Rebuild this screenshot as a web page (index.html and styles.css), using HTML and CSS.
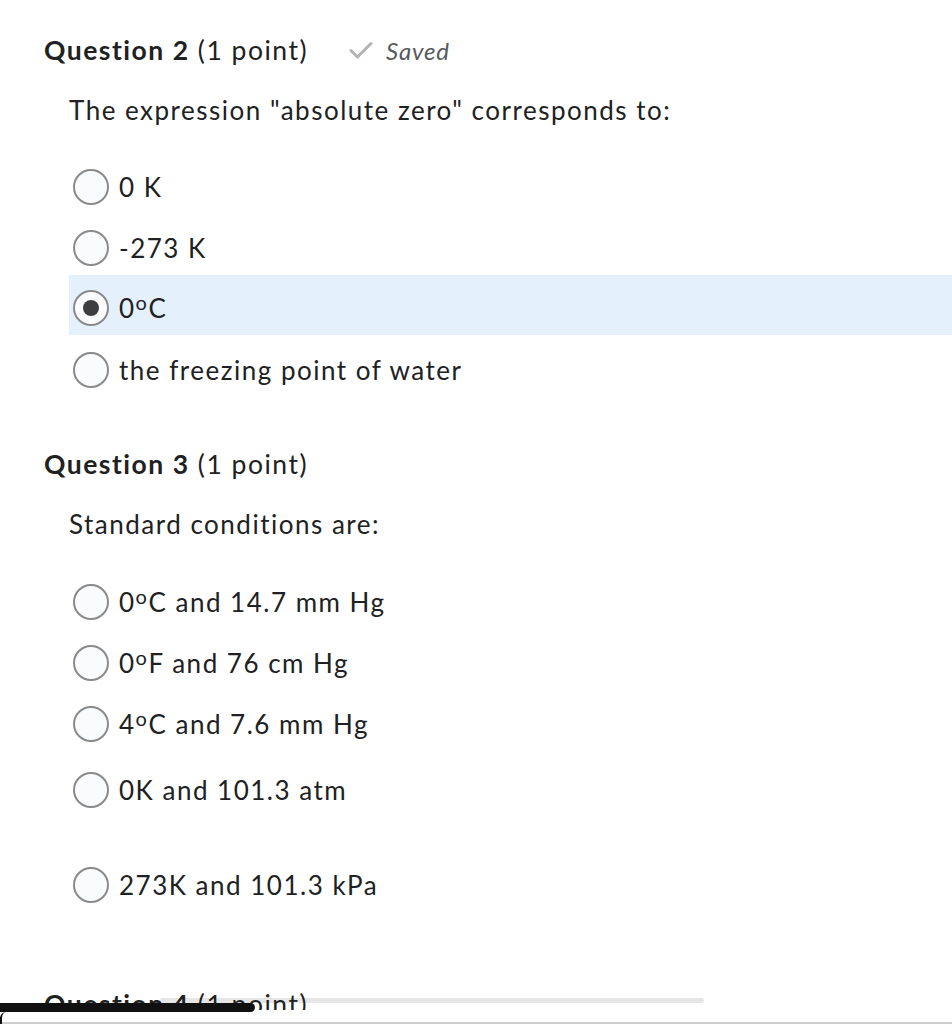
FILE: index.html
```html
<!DOCTYPE html>
<html>
<head>
<meta charset="utf-8">
<link rel="stylesheet" href="styles.css">
</head>
<body>
<div class="page">
  <section class="question q2">
    <div class="q-head">
      <h2 class="q-title"><b>Question 2</b> (1 point)</h2>
      <span class="saved">
        <svg class="check" width="26" height="20" viewBox="0 0 26 20"><path d="M3 10.5 L9.5 17 L23 3.5" fill="none" stroke="#b3b3b3" stroke-width="3" stroke-linecap="round" stroke-linejoin="round"/></svg>
        <i>Saved</i>
      </span>
    </div>
    <p class="prompt">The expression "absolute zero" corresponds to:</p>
    <ul class="options">
      <li class="opt"><span class="radio"></span><span>0 K</span></li>
      <li class="opt"><span class="radio"></span><span>-273 K</span></li>
      <li class="opt selected"><span class="radio checked"></span><span>0<sup class="deg">o</sup>C</span></li>
      <li class="opt"><span class="radio"></span><span>the freezing point of water</span></li>
    </ul>
  </section>

  <section class="question q3">
    <div class="q-head">
      <h2 class="q-title"><b>Question 3</b> (1 point)</h2>
    </div>
    <p class="prompt">Standard conditions are:</p>
    <ul class="options opts3">
      <li class="opt"><span class="radio"></span><span>0<sup class="deg">o</sup>C and 14.7 mm Hg</span></li>
      <li class="opt"><span class="radio"></span><span>0<sup class="deg">o</sup>F and 76 cm Hg</span></li>
      <li class="opt"><span class="radio"></span><span>4<sup class="deg">o</sup>C and 7.6 mm Hg</span></li>
      <li class="opt tall"><span class="radio"></span><span>0K and 101.3 atm</span></li>
      <li class="opt last"><span class="radio"></span><span>273K and 101.3 kPa</span></li>
    </ul>
  </section>

  <div class="scrollbar"></div>

  <section class="question q4">
    <h2 class="q-title"><b>Question 4</b> (1 point)</h2>
  </section>

  <div class="bottom-cover"></div>
  <div class="scrollthumb"></div>
  <div class="corner"></div>
</div>
</body>
</html>
```

FILE: styles.css
```css
html, body {
  margin: 0;
  padding: 0;
  background: #ffffff;
}
body {
  font-family: Lato, "Open Sans", sans-serif;
  color: #202122;
  width: 952px;
  height: 1024px;
  overflow: hidden;
  font-variant-ligatures: none;
}
.page {
  position: relative;
  height: 1024px;
  overflow: hidden;
  padding-top: 30px;
  box-sizing: border-box;
}
.question {
  padding-left: 44px;
}
.q-head {
  display: flex;
  align-items: center;
  gap: 40px;
  height: 40px;
}
.q-title {
  margin: 0;
  font-size: 26.5px;
  font-weight: 400;
  line-height: 40px;
  letter-spacing: 1.5px;
  color: #202122;
  white-space: nowrap;
}
.q-title b {
  font-weight: 700;
}
.saved {
  display: flex;
  align-items: center;
  gap: 12px;
  color: #565a5c;
  font-size: 24px;
  letter-spacing: 0.8px;
}
.check {
  display: block;
}
.prompt {
  margin: 0;
  padding-left: 25px;
  font-size: 26px;
  letter-spacing: 1.5px;
  line-height: 40px;
  margin-top: 20px;
}
.options {
  list-style: none;
  margin: 0;
  padding: 0;
  margin-left: 25px;
  margin-top: 23px;
}
.opt {
  display: flex;
  align-items: center;
  gap: 10px;
  height: 61px;
  padding-left: 4px;
  padding-top: 6px;
  box-sizing: border-box;
  font-size: 26px;
  letter-spacing: 1.5px;
}
.opt.selected {
  background: #e4f0fb;
  height: 60px;
  margin-bottom: 1px;
}
.radio {
  width: 32px;
  height: 32px;
  border: 2px solid #8a8a8a;
  border-radius: 50%;
  background: #f9fbfd;
  box-sizing: content-box;
  display: flex;
  align-items: center;
  justify-content: center;
  flex: none;
}
.radio.checked::after {
  content: "";
  width: 16px;
  height: 16px;
  border-radius: 50%;
  background: #3c3e40;
}
.deg {
  font-size: 20px;
  vertical-align: 8.5px;
  line-height: 0;
  letter-spacing: 1.5px;
}
.q3 {
  margin-top: 47px;
}
.q3 .prompt {
  margin-top: 20px;
}
.opts3 {
  margin-top: 24px;
}
.opt.tall {
  height: 66px;
  padding-top: 11px;
}
.opt.last {
  margin-top: 34px;
}
.q4 {
  position: relative;
  margin-top: 72px;
}
.scrollbar {
  position: absolute;
  left: 160px;
  top: 998px;
  width: 544px;
  height: 5px;
  background: #e6e6e6;
  border-radius: 3px;
}
.bottom-cover {
  position: absolute;
  left: 0;
  top: 1010px;
  width: 952px;
  height: 12px;
  background: #ffffff;
  border-bottom: 2px solid #cfcfcf;
}
.scrollthumb {
  position: absolute;
  left: 0;
  top: 1003px;
  width: 255px;
  height: 9px;
  background: #111111;
  border-radius: 0 5px 5px 0;
}
.corner {
  position: absolute;
  left: 0;
  top: 1012px;
  width: 6px;
  height: 14px;
  border-left: 2px solid #111;
  border-top-left-radius: 8px;
  box-sizing: border-box;
}
```
